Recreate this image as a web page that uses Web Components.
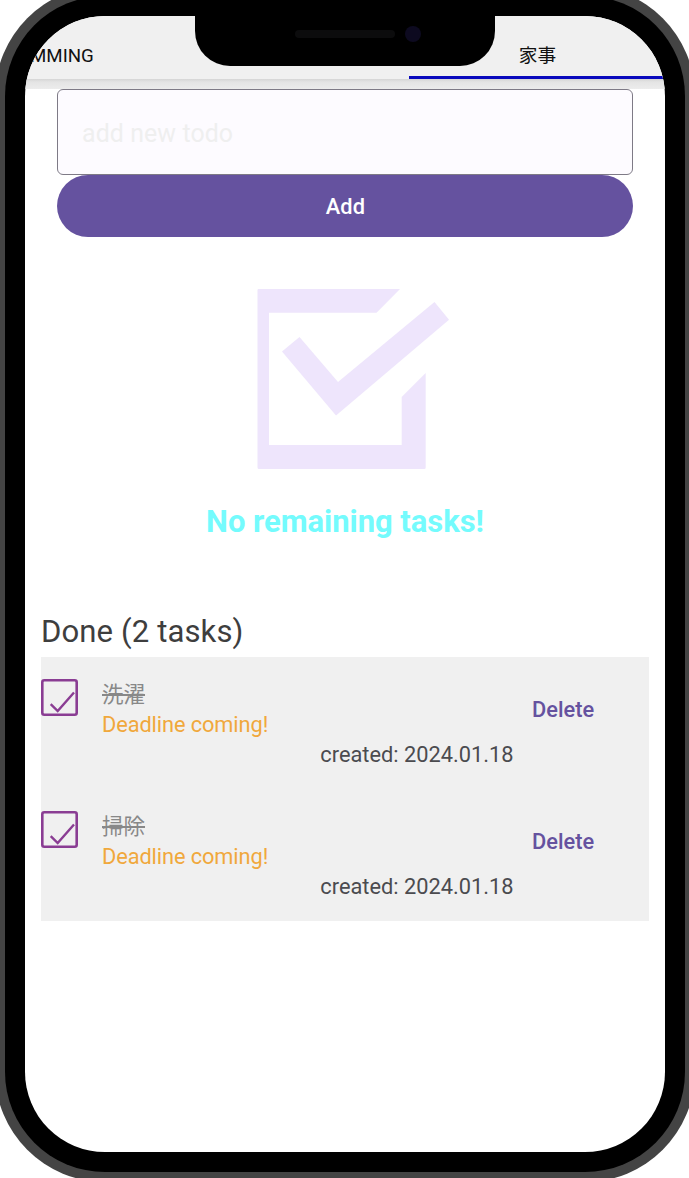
<!DOCTYPE html>
<html lang="en">
<head>
<meta charset="utf-8">
<title>Todo</title>
<style>
html,body{margin:0;padding:0;background:#fff;width:689px;height:1178px;overflow:hidden}
body{font-family:Roboto,"Noto Sans CJK JP",sans-serif}
</style>
</head>
<body>
<phone-frame>
  <tab-bar>
    <tab-item>MMING</tab-item>
    <tab-item active>家事</tab-item>
  </tab-bar>
  <todo-form></todo-form>
  <empty-state>No remaining tasks!</empty-state>
  <task-list heading="Done (2 tasks)">
    <task-row created="2024.01.18">洗濯</task-row>
    <task-row created="2024.01.18">掃除</task-row>
  </task-list>
</phone-frame>
<script>
const define = (name, html, setup) => customElements.define(name, class extends HTMLElement {
  constructor() {
    super();
    const t = document.createElement('template');
    t.innerHTML = html;
    this.attachShadow({ mode: 'open' }).append(t.content.cloneNode(true));
  }
  connectedCallback() { if (setup) setup(this, this.shadowRoot); }
});

define('phone-frame', `
<style>
:host{display:block;box-sizing:border-box;width:700px;height:1196px;margin:-14px 0 0 -5px;padding:10px;background:#444;border-radius:110px}
.bezel{box-sizing:border-box;height:100%;padding:20px;background:#000;border-radius:100px}
.screen{position:relative;height:1136px;border-radius:80px;background:#fff;overflow:hidden}
.notch{position:absolute;z-index:3;left:170px;top:0;width:300px;height:50px;background:#000;border-radius:0 0 35px 35px}
.speaker{position:absolute;left:100px;top:14px;width:100px;height:8px;border-radius:4px;background:#0c0c0d}
.camera{position:absolute;left:210px;top:10px;width:16px;height:16px;border-radius:50%;background:#0d0a20}
</style>
<div class="bezel"><div class="screen">
<div class="notch"><div class="speaker"></div><div class="camera"></div></div>
<slot></slot></div></div>`);

define('tab-bar', `
<style>
:host{display:block;height:73px;background:linear-gradient(#f0f0f0 0 63px,#d5d5d5 63px,#e4e4e4 66px,#ececec 73px)}
div{display:flex;height:63px;margin-left:-128px}
</style><div><slot></slot></div>`);

define('tab-item', `
<style>
:host{display:flex;flex:none;width:256px;height:63px;box-sizing:border-box;justify-content:center;padding:28px 0 0 1px;font-size:18.7px;line-height:24px;color:#111}
:host(:first-child){width:512px;justify-content:flex-start;padding-left:133px}
:host([active]){border-bottom:3px solid #0909bd}
</style><slot></slot>`);

define('todo-form', `
<style>
:host{display:flex;flex-direction:column;margin:0 32px}
.field{box-sizing:border-box;height:86px;border:1.6px solid #7e7a86;border-radius:6px;background:#fdfbff;padding:2px 24px 0;display:flex;align-items:center;font-size:24.9px;letter-spacing:.1px;color:#efefef}
.add{height:62px;border-radius:31px;background:#65529f;color:#fff;display:flex;align-items:center;justify-content:center;font-size:21.8px;font-weight:500;letter-spacing:.16px;padding-left:1px}
</style><div class="field">add new todo</div><div class="add">Add</div>`);

define('empty-state', `
<style>
:host{display:flex;flex-direction:column;align-items:center;height:370px;color:#74fbfd;font-size:31px;letter-spacing:-.05px;font-weight:700;line-height:40px}
svg{display:block;width:194px;height:182px;margin:51px 0 32px 17px;fill:#eee5fc}
</style>
<svg viewBox="257 288 194 182"><path d="M258.500 289H400L376.500 312.700H269V445H401.700V397L425.700 373V467.500Q425.700 469 424.200 469H259Q257.500 469 257.500 467.500V290Q257.500 289 258.500 289Z"/><path d="M282 351.500 299.500 337 338 382 434.500 302 449 319.800 336 415.500Z"/></svg>
<div><slot></slot></div>`);

define('task-list', `
<style>
:host{display:block;margin:0 16px}
h2{margin:0;height:50px;line-height:50px;font-size:31.1px;font-weight:400;letter-spacing:.1px;color:#3e3e3e}
section{background:#f0f0f0}
</style><h2></h2><section><slot></slot></section>`, (el, r) => r.querySelector('h2').textContent = el.getAttribute('heading'));

define('task-row', `
<style>
:host{display:flex;height:132px;font-size:21.8px;line-height:30px}
svg{display:block;width:37px;height:37px;margin:21.500px 24px 0 0;fill:none;stroke:#8a3d93}
.info{width:412px;padding-top:23px}
.name{color:#888;text-decoration:line-through;font-size:21.500px}
.due{color:#f0a83c;letter-spacing:-.1px}
.created{color:#4b4b4f;text-align:right;padding-right:.5px}
.delete{color:#65529f;font-weight:500;padding-top:38px;margin-left:18px}
</style>
<svg viewBox="0 0 37 37"><rect x="1.300" y="1.300" width="34.400" height="34.400" rx="2" stroke-width="2.600"/><path d="M9.700 25.200 16.700 32 33 13.500" stroke-width="2.400"/></svg>
<div class="info"><div class="name"><slot></slot></div><div class="due">Deadline coming!</div><div class="created"></div></div>
<div class="delete">Delete</div>`, (el, r) => r.querySelector('.created').textContent = 'created: ' + el.getAttribute('created'));
</script>
</body>
</html>
